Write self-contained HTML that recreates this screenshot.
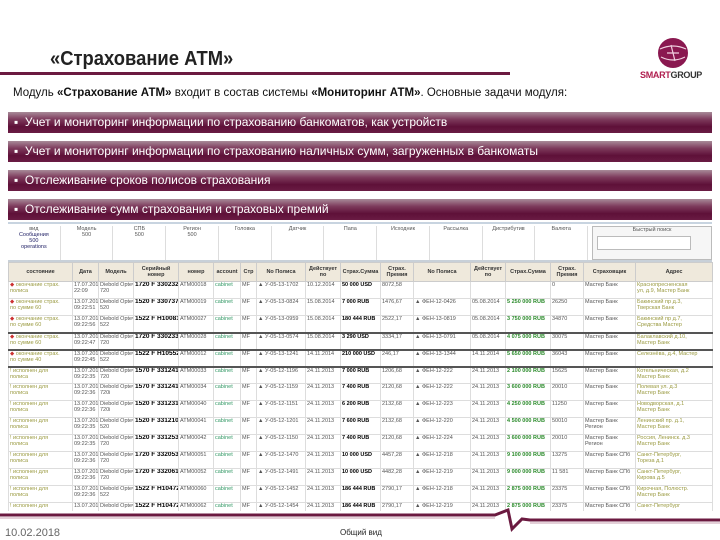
<!DOCTYPE html>
<html><head><meta charset="utf-8"><style>
*{margin:0;padding:0;box-sizing:border-box}
body{width:720px;height:540px;background:#fff;position:relative;overflow:hidden;font-family:"Liberation Sans",sans-serif}
.abs{position:absolute}
.band{position:absolute;left:8px;width:704px;height:21px;background:linear-gradient(#a88a98 0%,#7d3a5c 35%,#5e1038 70%,#6a1c44 100%);color:#fff;font-size:12px;line-height:21px;padding-left:6px;white-space:nowrap}
table{border-collapse:collapse;table-layout:fixed;font-size:5.5px;color:#555}
td{border:1px solid #ddd;vertical-align:top;padding:0 1px;overflow:hidden;white-space:nowrap;height:17px;line-height:6px}
th{border:1px solid #ccc;background:#efe9dc;font-weight:bold;font-size:5.5px;height:19px;color:#333}
.g{color:#2a8a2a;font-weight:bold}.b{color:#000;font-weight:bold;font-size:6.5px}.y{color:#9a9a40}.r{color:#c33}
</style></head><body>
<div class="abs" style="left:50px;top:48px;font-size:20px;color:#222;font-weight:bold;transform:scaleX(0.92);transform-origin:left">«Страхование АТМ»</div>
<div class="abs" style="left:0;top:72px;width:510px;height:3px;background:#6b1a40"></div>
<svg class="abs" style="left:657px;top:37px" width="32" height="32" viewBox="0 0 32 32"><circle cx="16" cy="16" r="15" fill="#8a1850"/><path d="M3 12 Q16 6 29 12 M4 20 Q16 26 28 20 M10 16 L22 16 M14 8 L18 24" stroke="#f0d0e0" stroke-width="1.2" fill="none"/></svg>
<div class="abs" style="left:640px;top:70px;font-size:9px;font-weight:bold;letter-spacing:-0.3px"><span style="color:#b02050">SMART</span><span style="color:#333">GROUP</span></div>
<div class="abs" style="left:13px;top:87px;font-size:11.5px;color:#111;white-space:nowrap">Модуль <b>«Страхование АТМ»</b> входит в состав системы <b>«Мониторинг АТМ»</b>. Основные задачи модуля:</div>
<div class="band" style="top:112px">▪&nbsp; Учет и мониторинг информации по страхованию банкоматов, как устройств</div>
<div class="band" style="top:141px">▪&nbsp; Учет и мониторинг информации по страхованию наличных сумм, загруженных в банкоматы</div>
<div class="band" style="top:170px">▪&nbsp; Отслеживание сроков полисов страхования</div>
<div class="band" style="top:199px">▪&nbsp; Отслеживание сумм страхования и страховых премий</div>
<div class="abs" style="left:8px;top:222px;width:704px;height:40px;border-top:2px solid #c8d4e0;border-bottom:2px solid #c8d0d8;font-size:5.5px;color:#555">
<div class="abs" style="left:0;top:2px;width:580px;height:34px;display:flex">
<div style="flex:1;border-right:1px solid #ddd;text-align:center">вид<br><span style="color:#226">Сообщения<br>500<br>operations</span></div>
<div style="flex:1;border-right:1px solid #ddd;text-align:center">Модель<br>500</div>
<div style="flex:1;border-right:1px solid #ddd;text-align:center">СПБ<br>500</div>
<div style="flex:1;border-right:1px solid #ddd;text-align:center">Регион<br>500</div>
<div style="flex:1;border-right:1px solid #ddd;text-align:center">Головка</div>
<div style="flex:1;border-right:1px solid #ddd;text-align:center">Датчик</div>
<div style="flex:1;border-right:1px solid #ddd;text-align:center">Папа</div>
<div style="flex:1;border-right:1px solid #ddd;text-align:center">Исходник</div>
<div style="flex:1;border-right:1px solid #ddd;text-align:center">Рассылка</div>
<div style="flex:1;border-right:1px solid #ddd;text-align:center">Дистрибутив</div>
<div style="flex:1;border-right:1px solid #ddd;text-align:center">Валюта</div></div>
<div class="abs" style="left:584px;top:2px;width:120px;height:34px;border:1px solid #bbb;background:#f6f6f6;text-align:center">Быстрый поиск<div style="margin:3px 20px 0 4px;height:14px;border:1px solid #bbb;background:#fff"></div></div>
</div>
<table class="abs" style="left:8px;top:262px;width:704px">
<colgroup><col style="width:64px"><col style="width:26px"><col style="width:35px"><col style="width:45px"><col style="width:35px"><col style="width:27px"><col style="width:16px"><col style="width:49px"><col style="width:35px"><col style="width:40px"><col style="width:33px"><col style="width:57px"><col style="width:35px"><col style="width:45px"><col style="width:33px"><col style="width:52px"><col style="width:77px"></colgroup>
<tr><th>состояние</th><th>Дата</th><th>Модель</th><th>Серийный номер</th><th>номер</th><th>account</th><th>Стр</th><th>No Полиса</th><th>Действует по</th><th>Страх.Сумма</th><th>Страх. Премия</th><th>No Полиса</th><th>Действует по</th><th>Страх.Сумма</th><th>Страх. Премия</th><th>Страховщик</th><th>Адрес</th></tr>
<tr><td class="y"><span class="r">◆</span> окончание страх.<br>полиса</td><td>17.07.2013<br>22:09</td><td>Diebold Opteva<br>720</td><td class="b">1720 F 3302329</td><td>ATM00018</td><td style="color:#396">cabinet</td><td>MF</td><td>▲ У-05-13-1702</td><td>10.12.2014</td><td class="b" style="font-size:5.5px">50 000 USD</td><td>8072,58</td><td></td><td></td><td></td><td>0</td><td>Мастер Банк</td><td class="y">Краснопресненская<br>ул, д.9, Мастер Банк</td></tr>
<tr><td class="y"><span class="r">◆</span> окончание страх.<br>по сумме 60</td><td>13.07.2013<br>09:22:51</td><td>Diebold Opteva<br>520</td><td class="b">1520 F 3307371</td><td>ATM00019</td><td style="color:#396">cabinet</td><td>MF</td><td>▲ У-05-13-0824</td><td>15.08.2014</td><td class="b" style="font-size:5.5px">7 000 RUB</td><td>1476,67</td><td>▲ ФЕН-12-0426</td><td>05.08.2014</td><td class="g">5 250 000 RUB</td><td>26250</td><td>Мастер Банк</td><td class="y">Бакинский пр д.3,<br>Тверская Банк</td></tr>
<tr><td class="y"><span class="r">◆</span> окончание страх.<br>по сумме 60</td><td>13.07.2013<br>09:22:56</td><td>Diebold Opteva<br>522</td><td class="b">1522 F H10081</td><td>ATM00027</td><td style="color:#396">cabinet</td><td>MF</td><td>▲ У-05-13-0959</td><td>15.08.2014</td><td class="b" style="font-size:5.5px">180 444 RUB</td><td>2522,17</td><td>▲ ФЕН-13-0819</td><td>05.08.2014</td><td class="g">3 750 000 RUB</td><td>34870</td><td>Мастер Банк</td><td class="y">Бакинский пр д.7,<br>Средства Мастер</td></tr>
<tr style="border-top:2px solid #555"><td class="y"><span class="r">◆</span> окончание страх.<br>по сумме 60</td><td>13.07.2013<br>09:22:47</td><td>Diebold Opteva<br>720</td><td class="b">1720 F 3302331</td><td>ATM00028</td><td style="color:#396">cabinet</td><td>MF</td><td>▲ У-05-13-0574</td><td>15.08.2014</td><td class="b" style="font-size:5.5px">3 290 USD</td><td>3334,17</td><td>▲ ФЕН-13-0791</td><td>05.08.2014</td><td class="g">4 075 000 RUB</td><td>30075</td><td>Мастер Банк</td><td class="y">Балаклавский д.10,<br>Мастер Банк</td></tr>
<tr style="border-top:2px solid #555;border-bottom:2px solid #555"><td class="y"><span class="r">◆</span> окончание страх.<br>по сумме 40</td><td>13.07.2013<br>09:22:45</td><td>Diebold Opteva<br>522</td><td class="b">1522 F H105525</td><td>ATM00012</td><td style="color:#396">cabinet</td><td>MF</td><td>▲ У-05-13-1241</td><td>14.11.2014</td><td class="b" style="font-size:5.5px">210 000 USD</td><td>246,17</td><td>▲ ФЕН-13-1344</td><td>14.11.2014</td><td class="g">5 650 000 RUB</td><td>36043</td><td>Мастер Банк</td><td class="y">Селезнёва, д.4, Мастер</td></tr>
<tr><td class="y">! исполнен для<br>полиса</td><td>13.07.2013<br>09:22:35</td><td>Diebold Opteva<br>720</td><td class="b">1570 F 3312412</td><td>ATM00033</td><td style="color:#396">cabinet</td><td>MF</td><td>▲ У-05-12-1196</td><td>24.11.2013</td><td class="b" style="font-size:5.5px">7 000 RUB</td><td>1206,68</td><td>▲ ФЕН-12-222</td><td>24.11.2013</td><td class="g">2 100 000 RUB</td><td>15625</td><td>Мастер Банк</td><td class="y">Котельническая, д.2<br>Мастер Банк</td></tr>
<tr><td class="y">! исполнен для<br>полиса</td><td>13.07.2013<br>09:22:36</td><td>Diebold Opteva<br>720i</td><td class="b">1570 F 3312412</td><td>ATM00034</td><td style="color:#396">cabinet</td><td>MF</td><td>▲ У-05-12-1159</td><td>24.11.2013</td><td class="b" style="font-size:5.5px">7 400 RUB</td><td>2120,68</td><td>▲ ФЕН-12-222</td><td>24.11.2013</td><td class="g">3 600 000 RUB</td><td>20010</td><td>Мастер Банк</td><td class="y">Полевая ул. д.3<br>Мастер Банк</td></tr>
<tr><td class="y">! исполнен для<br>полиса</td><td>13.07.2013<br>09:22:36</td><td>Diebold Opteva<br>720i</td><td class="b">1520 F 3312314</td><td>ATM00040</td><td style="color:#396">cabinet</td><td>MF</td><td>▲ У-05-12-1151</td><td>24.11.2013</td><td class="b" style="font-size:5.5px">6 200 RUB</td><td>2132,68</td><td>▲ ФЕН-12-223</td><td>24.11.2013</td><td class="g">4 250 000 RUB</td><td>11250</td><td>Мастер Банк</td><td class="y">Новодворская, д.1<br>Мастер Банк</td></tr>
<tr><td class="y">! исполнен для<br>полиса</td><td>13.07.2013<br>09:22:35</td><td>Diebold Opteva<br>520</td><td class="b">1520 F 3312109</td><td>ATM00041</td><td style="color:#396">cabinet</td><td>MF</td><td>▲ У-05-12-1201</td><td>24.11.2013</td><td class="b" style="font-size:5.5px">7 600 RUB</td><td>2132,68</td><td>▲ ФЕН-12-220</td><td>24.11.2013</td><td class="g">4 500 000 RUB</td><td>50010</td><td>Мастер Банк<br>Регион</td><td class="y">Ленинский пр. д.1,<br>Мастер Банк</td></tr>
<tr><td class="y">! исполнен для<br>полиса</td><td>13.07.2013<br>09:22:35</td><td>Diebold Opteva<br>720</td><td class="b">1520 F 3312532</td><td>ATM00042</td><td style="color:#396">cabinet</td><td>MF</td><td>▲ У-05-12-1150</td><td>24.11.2013</td><td class="b" style="font-size:5.5px">7 400 RUB</td><td>2120,68</td><td>▲ ФЕН-12-224</td><td>24.11.2013</td><td class="g">3 600 000 RUB</td><td>20010</td><td>Мастер Банк<br>Регион</td><td class="y">Россия, Ленинск. д.3<br>Мастер Банк</td></tr>
<tr><td class="y">! исполнен для<br>полиса</td><td>13.07.2013<br>09:22:36</td><td>Diebold Opteva<br>720</td><td class="b">1720 F 3320535</td><td>ATM00051</td><td style="color:#396">cabinet</td><td>MF</td><td>▲ У-05-12-1470</td><td>24.11.2013</td><td class="b" style="font-size:5.5px">10 000 USD</td><td>4457,28</td><td>▲ ФЕН-12-218</td><td>24.11.2013</td><td class="g">9 100 000 RUB</td><td>13275</td><td>Мастер Банк СПб</td><td class="y">Санкт-Петербург,<br>Тореза д.1</td></tr>
<tr><td class="y">! исполнен для<br>полиса</td><td>13.07.2013<br>09:22:36</td><td>Diebold Opteva<br>720</td><td class="b">1720 F 3320618</td><td>ATM00052</td><td style="color:#396">cabinet</td><td>MF</td><td>▲ У-05-12-1491</td><td>24.11.2013</td><td class="b" style="font-size:5.5px">10 000 USD</td><td>4482,28</td><td>▲ ФЕН-12-219</td><td>24.11.2013</td><td class="g">9 000 000 RUB</td><td>11 581</td><td>Мастер Банк СПб</td><td class="y">Санкт-Петербург,<br>Кирова д.5</td></tr>
<tr><td class="y">! исполнен для<br>полиса</td><td>13.07.2013<br>09:22:36</td><td>Diebold Opteva<br>522</td><td class="b">1522 F H104720</td><td>ATM00060</td><td style="color:#396">cabinet</td><td>MF</td><td>▲ У-05-12-1452</td><td>24.11.2013</td><td class="b" style="font-size:5.5px">186 444 RUB</td><td>2790,17</td><td>▲ ФЕН-12-218</td><td>24.11.2013</td><td class="g">2 875 000 RUB</td><td>23375</td><td>Мастер Банк СПб</td><td class="y">Кирочная, Полюстр.<br>Мастер Банк</td></tr>
<tr><td class="y">! исполнен для</td><td>13.07.2013</td><td>Diebold Opteva</td><td class="b">1522 F H104721</td><td>ATM00062</td><td style="color:#396">cabinet</td><td>MF</td><td>▲ У-05-12-1454</td><td>24.11.2013</td><td class="b" style="font-size:5.5px">186 444 RUB</td><td>2790,17</td><td>▲ ФЕН-12-219</td><td>24.11.2013</td><td class="g">2 875 000 RUB</td><td>23375</td><td>Мастер Банк СПб</td><td class="y">Санкт-Петербург</td></tr>
</table>
<div class="abs" style="left:0;top:511px;width:720px;height:29px;background:#fff"></div>
<svg class="abs" style="left:0;top:505px" width="720" height="30" viewBox="0 0 720 30"><path d="M0 10 L495 10 L508 5 L512 24 L522 14 L530 15 L720 15" stroke="#6b1a40" stroke-width="3" fill="none"/><path d="M0 13 L495 13 M530 18 L720 18" stroke="#c8a0b0" stroke-width="1" fill="none"/></svg>
<div class="abs" style="left:5px;top:527px;font-size:11px;color:#666">10.02.2018</div>
<div class="abs" style="left:340px;top:528px;font-size:8px;color:#222">Общий вид</div>
</body></html>
